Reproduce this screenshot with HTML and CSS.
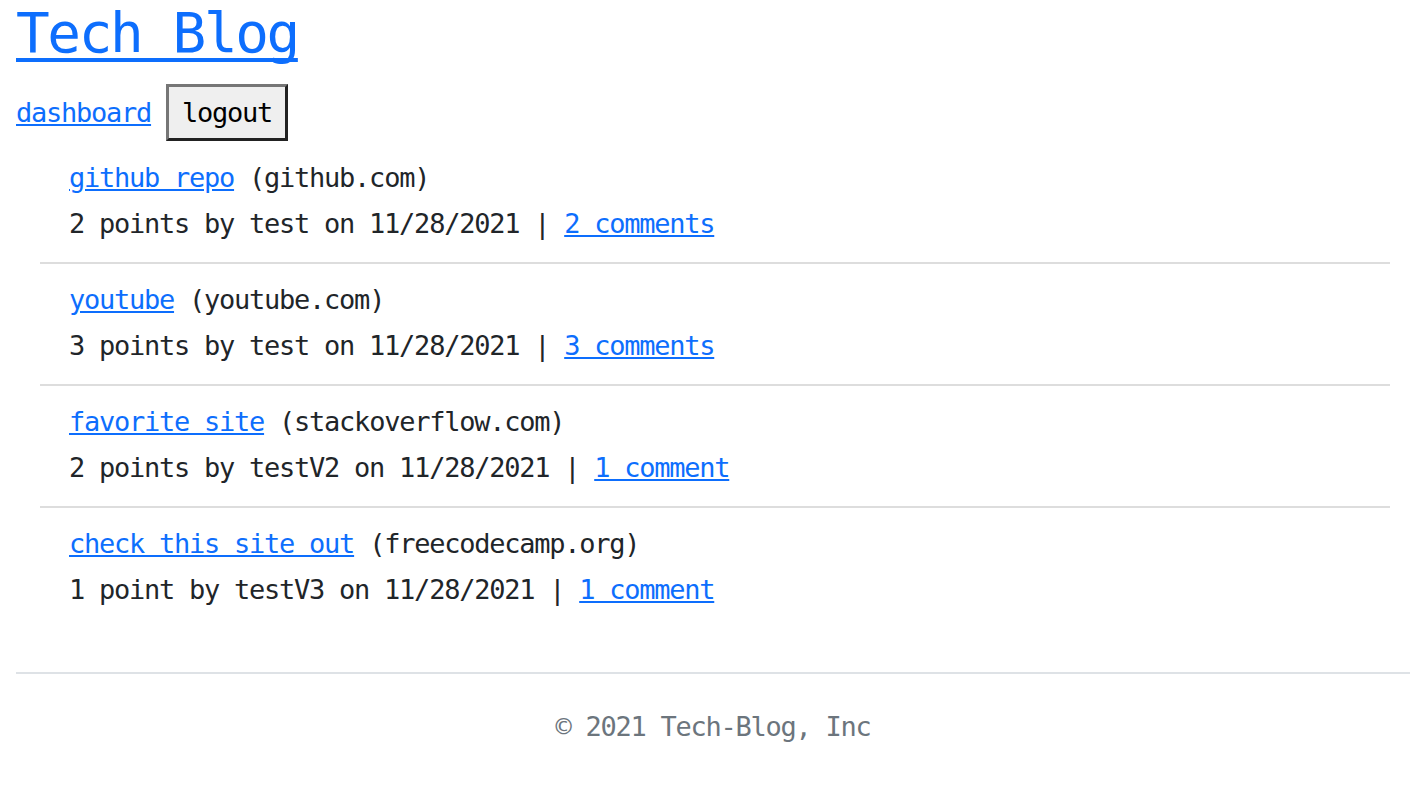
FILE: index.html
```html
<!DOCTYPE html>
<html lang="en">
<head>
<meta charset="utf-8">
<title>Tech Blog</title>
<link rel="stylesheet" href="styles.css">
</head>
<body>
<header class="site-header">
  <h1 class="site-title"><a href="#">Tech Blog</a></h1>
  <nav class="site-nav">
    <a href="#">dashboard</a>
    <button class="logout-btn" type="button">logout</button>
  </nav>
</header>
<main class="posts">
  <article class="post">
    <div class="post-title"><a href="#">github repo</a> <span class="domain">(github.com)</span></div>
    <div class="post-meta">2 points by test on 11/28/2021 | <a href="#">2 comments</a></div>
  </article>
  <article class="post">
    <div class="post-title"><a href="#">youtube</a> <span class="domain">(youtube.com)</span></div>
    <div class="post-meta">3 points by test on 11/28/2021 | <a href="#">3 comments</a></div>
  </article>
  <article class="post">
    <div class="post-title"><a href="#">favorite site</a> <span class="domain">(stackoverflow.com)</span></div>
    <div class="post-meta">2 points by testV2 on 11/28/2021 | <a href="#">1 comment</a></div>
  </article>
  <article class="post">
    <div class="post-title"><a href="#">check this site out</a> <span class="domain">(freecodecamp.org)</span></div>
    <div class="post-meta">1 point by testV3 on 11/28/2021 | <a href="#">1 comment</a></div>
  </article>
</main>
<footer class="site-footer">
  <p>© 2021 Tech-Blog, Inc</p>
</footer>
</body>
</html>
```
FILE: styles.css
```css
html, body {
  margin: 0;
  padding: 0;
  background: #fff;
}
body {
  font-family: "DejaVu Sans Mono", "Liberation Mono", monospace;
  font-size: 27px;
  letter-spacing: -1.25px;
  color: #212529;
  line-height: 46px;
}
a {
  color: #0d6efd;
  text-decoration: underline;
}
.site-header {
  padding: 0 16px;
}
.site-title {
  margin: 0;
  font-size: 56px;
  font-weight: normal;
  letter-spacing: -2.4px;
  line-height: 66px;
}
.site-title a {
  text-decoration-thickness: 4px;
  text-underline-offset: 6px;
  text-decoration-skip-ink: none;
}
.site-nav {
  display: flex;
  align-items: baseline;
  gap: 15px;
  margin-top: 18px;
  height: 58px;
}
.logout-btn {
  font-family: inherit;
  font-size: 27px;
  letter-spacing: -1.25px;
  color: #000;
  background: #efefef;
  border-style: solid;
  border-width: 3px;
  border-color: #767676 #222 #222 #767676;
  padding: 10px 13px;
  line-height: 31px;
  margin: 0;
}
.posts {
  margin: 0 20px 0 40px;
}
.post {
  padding: 13px 0 15px 29px;
  border-bottom: 2px solid #ddd;
}
.post:last-child {
  border-bottom: none;
}
.post-title, .post-meta {
  height: 46px;
}
.site-footer {
  margin: 44px 0 0 16px;
  border-top: 2px solid #dee2e6;
  color: #6c757d;
  text-align: center;
  padding-top: 30px;
}
.site-footer p {
  margin: 0;
}
```
